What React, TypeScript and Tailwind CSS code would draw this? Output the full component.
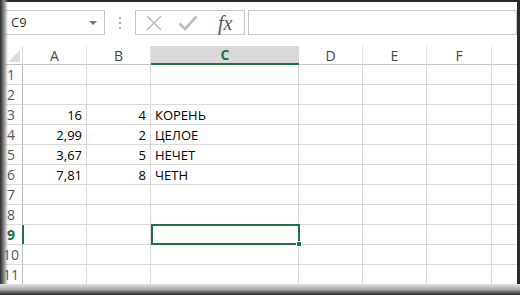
type Col = { key: string; cls: string };

const cols: Col[] = [
  { key: 'A', cls: 'w-[64px]' },
  { key: 'B', cls: 'w-[64px]' },
  { key: 'C', cls: 'w-[148px]' },
  { key: 'D', cls: 'w-[64px]' },
  { key: 'E', cls: 'w-[64px]' },
  { key: 'F', cls: 'w-[65px]' },
  { key: 'G', cls: 'w-[40px]' },
];

const data: Record<number, [string, string, string]> = {
  3: ['16', '4', 'КОРЕНЬ'],
  4: ['2,99', '2', 'ЦЕЛОЕ'],
  5: ['3,67', '5', 'НЕЧЕТ'],
  6: ['7,81', '8', 'ЧЕТН'],
};

const rows = [1, 2, 3, 4, 5, 6, 7, 8, 9, 10, 11];

function FormulaBar() {
  return (
    <div className="flex items-start pt-[8px] h-[44px] shrink-0">
      {/* name box */}
      <div className="relative flex items-center w-[105px] shrink-0 h-[25px] border border-[#c6c6c6] bg-white">
        <span className="pl-[10px] text-[13px] text-[#333]">C9</span>
        <span className="absolute right-[7px] top-[10px] w-0 h-0 border-l-[4px] border-r-[4px] border-t-[4px] border-l-transparent border-r-transparent border-t-[#777]" />
      </div>
      {/* grip dots */}
      <div className="w-[30px] shrink-0 h-[25px] flex flex-col items-center justify-center gap-[3px]">
        <span className="w-[2px] h-[2px] bg-[#b0b0b0]" />
        <span className="w-[2px] h-[2px] bg-[#b0b0b0]" />
        <span className="w-[2px] h-[2px] bg-[#b0b0b0]" />
      </div>
      {/* cancel / enter / fx */}
      <div className="flex items-center w-[110px] shrink-0 h-[25px] border border-[#c6c6c6] bg-white">
        <svg width="18" height="16" viewBox="0 0 18 16" className="ml-[9px]">
          <path d="M2 1 L16 15 M16 1 L2 15" stroke="#bdbdbd" strokeWidth="1.6" fill="none" />
        </svg>
        <svg width="20" height="16" viewBox="0 0 20 16" className="ml-[15px]">
          <path d="M1.5 8.5 L7 14 L18.5 1.5" stroke="#bdbdbd" strokeWidth="2.6" fill="none" />
        </svg>
        <span className="ml-[20px] text-[20px] leading-none italic text-[#555] [font-family:'Liberation_Serif',serif]">
          fx
        </span>
      </div>
      {/* formula input */}
      <div className="ml-[3px] flex-1 h-[25px] border border-[#c6c6c6] bg-white" />
    </div>
  );
}

function HeaderRow() {
  return (
    <div className="flex h-[19px] shrink-0">
      <div className="relative w-[23px] shrink-0 h-full border-r border-[#d8d8d8] border-b border-b-[#bdbdbd]">
        <svg width="12" height="12" viewBox="0 0 12 12" className="absolute right-[2px] bottom-[2px]">
          <path d="M12 0 L12 12 L0 12 Z" fill="#dcdcdc" />
        </svg>
      </div>
      {cols.map((c) =>
        c.key === 'C' ? (
          <div
            key={c.key}
            className={`${c.cls} shrink-0 h-full flex items-center justify-center bg-[#d9d9d9] border-b-2 border-[#217346] text-[14px] font-bold text-[#217346]`}
          >
            C
          </div>
        ) : (
          <div
            key={c.key}
            className={`${c.cls} shrink-0 h-full flex items-center justify-center border-r border-r-[#e2e2e2] border-b border-b-[#c8c8c8] text-[14px] text-[#444]`}
          >
            {c.key === 'G' ? '' : c.key}
          </div>
        )
      )}
    </div>
  );
}

function Row({ n }: { n: number }) {
  const vals = data[n];
  const active = n === 9;
  return (
    <div className="flex h-[20px] shrink-0">
      <div
        className={`relative w-[23px] shrink-0 h-full flex items-center justify-center border-r border-[#bdbdbd] border-b border-b-[#d9d9d9] text-[14px] ${
          active ? 'font-bold text-[#217346]' : 'text-[#555]'
        }`}
      >
        {n}
        {active && <span className="absolute right-[-2px] top-0 w-[2px] h-full bg-[#217346]" />}
      </div>
      {cols.map((c, i) => {
        const v = vals && i < 3 ? vals[i] : '';
        return (
          <div
            key={c.key}
            className={`${c.cls} relative shrink-0 h-full flex items-center pt-[2px] border-r border-r-[#d9d9d9] border-b border-b-[#d9d9d9] text-[13px] text-[#000] ${
              i < 2 ? 'justify-end pr-[4px]' : 'justify-start pl-[4px]'
            }`}
          >
            {v}
            {active && c.key === 'C' && (
              <div className="absolute left-0 top-[-1px] right-[-2px] bottom-[-1px] border-2 border-[#217346] z-10">
                <span className="absolute right-[-4px] bottom-[-4px] w-[6px] h-[6px] bg-[#217346] border border-white" />
              </div>
            )}
          </div>
        );
      })}
    </div>
  );
}

export default function App() {
  return (
    <div className="relative w-[520px] h-[295px] overflow-hidden bg-white [font-family:'Open_Sans','Liberation_Sans',sans-serif]">
      <div className="flex flex-col h-full border-t-2 border-[#2a2a2a] border-r-[3px] border-r-[#2a2a2a] overflow-hidden">
        <FormulaBar />
        <HeaderRow />
        <div className="flex-1 overflow-hidden">
          {rows.map((n) => (
            <Row key={n} n={n} />
          ))}
        </div>
      </div>
      {/* frame shadow, left */}
      <div className="absolute left-0 top-0 bottom-0 w-[8px] bg-gradient-to-r from-[#2b2b2b] via-[#8a8a8a] to-transparent" />
      {/* frame shadow, bottom */}
      <div className="absolute left-0 right-0 bottom-0 h-[11px] bg-gradient-to-b from-[#e6e6e6] via-[#a8a8a8] to-[#2a2a2a]" />
    </div>
  );
}
